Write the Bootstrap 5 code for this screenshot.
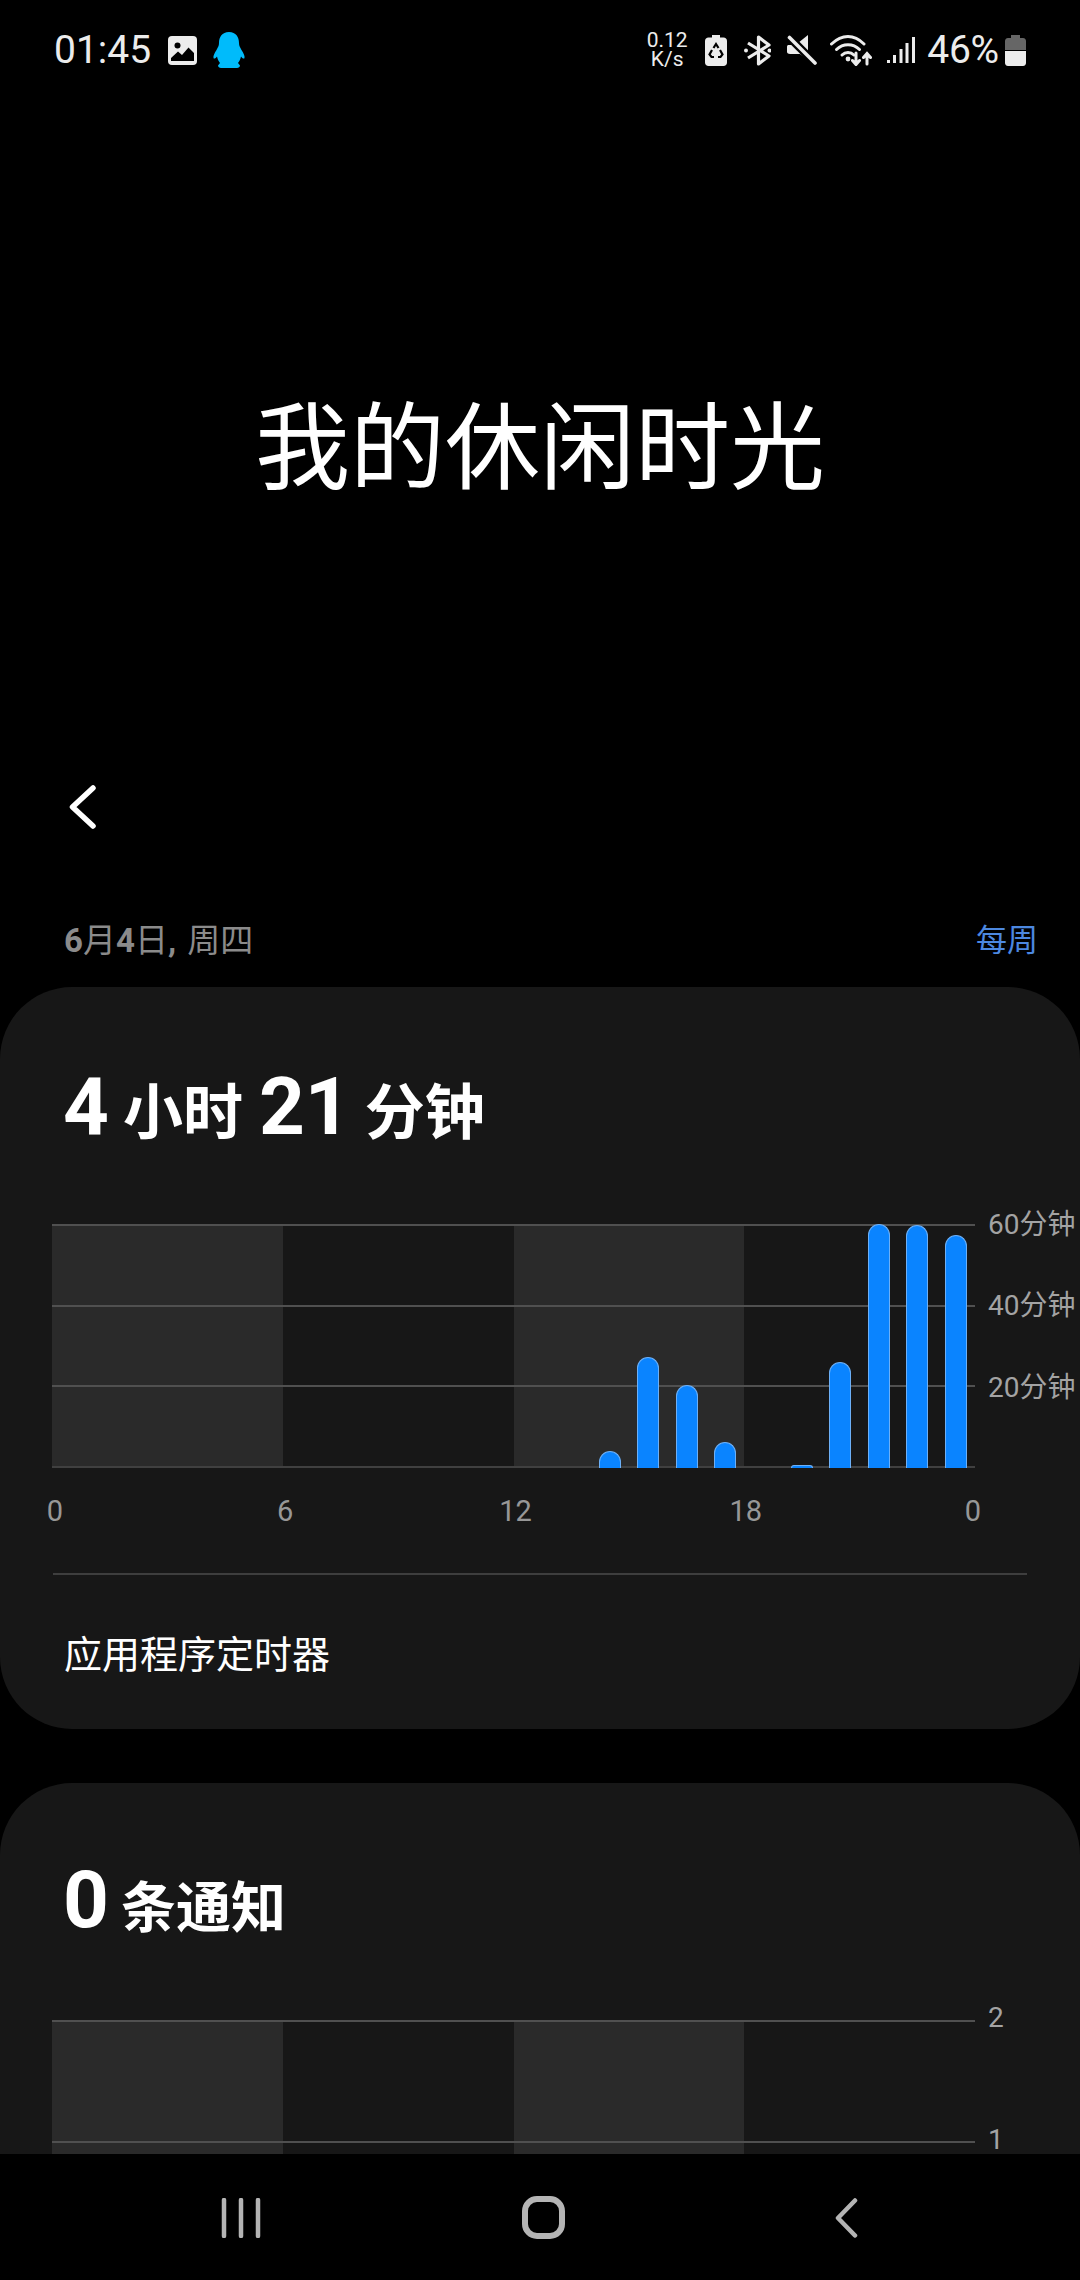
<!DOCTYPE html>
<html lang="zh-CN">
<head>
  <meta charset="UTF-8" />
  <meta name="viewport" content="width=device-width, initial-scale=1.0"/>
  <title>我的休闲时光</title>
  <link href="https://cdn.jsdelivr.net/npm/bootstrap@5.3.2/dist/css/bootstrap.min.css" rel="stylesheet">
  <style>
    body {
      width: 1080px;
      height: 2280px;
      background-color: #000;
      font-family: Roboto, "Noto Sans CJK SC", sans-serif;
      color: #fff;
      overflow: hidden;
      position: relative;
    }

    /* status bar */
    .status-bar { height: 100px; padding: 0 54px 0 54px; color: #ececec; }
    .clock { font-size: 39px; line-height: 1; width: 114px; }
    .batt-pct { font-size: 39px; line-height: 1; letter-spacing: -.2px; margin-left: 12px; margin-right: 6px; }
    .net-speed { font-size: 21px; line-height: 19px; width: 42px; text-align: center; margin-right: 17px; }
    .m-13 { margin-left: 13px; }
    .m-15 { margin-left: 15px; }
    .m-16 { margin-left: 16px; }
    .m-17 { margin-left: 17px; }

    /* title */
    .hero { height: 660px; padding-top: 285px; }
    .hero h1 { font-size: 95px; line-height: 130px; font-weight: 400; margin: 0; text-align: center; }
    .back-row { height: 100px; padding: 25px 0 0 69px; }
    .date-row { height: 127px; padding: 60px 42px 0 64px; line-height: 42px; }
    .date-txt { color: #8b8b8b; font-size: 33px; word-spacing: 3px; }
    .date-txt b { font-weight: 700; }
    .weekly { color: #4c88e0; font-size: 31px; }

    /* cards */
    .panel {
      background-color: #171717;
      border: 0;
      border-radius: 72px;
      color: #fff;
    }
    .panel-time { height: 742px; margin-bottom: 54px; padding-top: 75px; }
    .panel-notif { padding-top: 72px; }
    .headline { height: 90px; padding-left: 63px; line-height: 90px; font-weight: 700; white-space: nowrap; }
    .headline .num { font-size: 80px; }
    .headline .unit { font-size: 60px; margin: 0 16px 0 14px; }
    .panel-notif .headline .unit { font-size: 55px; margin-left: 12px; }
    .chart-wrap { padding-left: 52px; }
    .panel-time .chart-wrap { margin-top: 72px; }
    .panel-notif .chart-wrap { margin-top: 75px; }

    /* chart: three layers stacked in one grid cell */
    .plot { display: grid; width: 923px; flex: none; }
    .plot > div { grid-area: 1 / 1; }
    .bands { display: flex; }
    .bands div { width: 25%; }
    .bands div:nth-child(odd) { background-color: #2a2a2a; }
    .grid-lines { display: flex; flex-direction: column; }
    .grid-lines div { flex: 1; border-top: 2px solid #505050; }
    .grid-lines div:last-child { border-bottom: 2px solid #404040; }
    .bars { display: grid; grid-template-columns: repeat(24, 1fr); align-items: end; justify-items: center; }
    .hour-bar {
      width: 22px;
      background-color: #0a84ff;
      border: 1px solid #6db0f7;
      border-bottom: 0;
      border-radius: 11px 11px 0 0;
    }
    .hour-bar.tiny { border-radius: 3px 3px 0 0; }
    .plot-time { height: 244px; }
    .plot-notif { height: 366px; }

    .y-labels { margin: -22px 0 0 13px; color: #a3a3a3; font-size: 28px; line-height: 40px; white-space: nowrap; }
    .plot-time + .y-labels { margin-top: -19px; }
    .plot-time + .y-labels div { height: 81.4px; }
    .plot-notif + .y-labels div { height: 122px; }
    .x-labels { width: 923px; margin: 23px 0 0 52px; color: #979797; font-size: 29px; line-height: 40px; }
    .x-labels span { width: 0; display: flex; justify-content: center; }
    .x-labels span:not(:last-child) { padding-left: 3px; }
    .x-labels span:last-child { margin-right: 2px; }

    .rule { margin: 42px 53px 0; height: 2px; background-color: #3e3e3e; }
    .timer-row { padding: 54px 0 0 64px; font-size: 38px; line-height: 52px; }

    /* bottom navigation sits over the scrolled content */
    .nav-keys {
      position: absolute;
      left: 0;
      right: 0;
      bottom: 0;
      height: 126px;
      background-color: #000;
    }
    .nav-keys svg { position: absolute; top: 44px; }
    .nav-keys svg.key-home { top: 42px; }
    .key-recent { left: 220px; }
    .key-home { left: 520px; }
    .key-back { left: 832px; }
  </style>
</head>
<body>

<div class="status-bar d-flex align-items-center">
  <span class="clock">01:45</span>
  <svg width="29" height="29" viewBox="0 0 29 29">
    <rect width="29" height="29" rx="4" fill="#ececec"/>
    <circle cx="9.5" cy="9.5" r="3" fill="#000"/>
    <path d="M3 25V22L10 15.5L14 19L20.5 11.5L26 17V25Z" fill="#000"/>
  </svg>
  <svg width="32" height="36" viewBox="0 0 32 36" class="m-16">
    <path fill="#00bbfb" d="M16 0C23 0 26 5 26 11C26 14 27 15 28.5 18C30.5 21 32 24 31.5 26C31 27.5 29 26 28 24.5C27.5 27 26.5 29 25 31L27 33.5C27 35 25.5 36 24 36H8C6.5 36 5 35 5 33.5L7 31C5.5 29 4.5 27 4 24.5C3 26 1 27.5 .5 26C0 24 1.5 21 3.5 18C5 15 6 14 6 11C6 5 9 0 16 0Z"/>
  </svg>

  <div class="net-speed ms-auto">0.12<br>K/s</div>
  <svg width="22" height="31" viewBox="0 0 22 31">
    <path fill="#ececec" d="M7 0H15V2.5H18.5C20.5 2.5 22 4 22 6V27.5C22 29.5 20.5 31 18.5 31H3.5C1.5 31 0 29.5 0 27.5V6C0 4 1.5 2.5 3.5 2.5H7Z"/>
    <path fill="none" stroke="#000" stroke-width="2.2" d="M8.5 13L11 9L13.5 13M15 15L17.5 19.5L15.5 22H13M9 22H6.5L4.5 19.5L7 15"/>
  </svg>
  <svg width="27" height="31" viewBox="0 0 27 31" class="m-17">
    <path fill="none" stroke="#ececec" stroke-width="3.2" stroke-linejoin="round" d="M14.5 15.5V2L25 10L4 23M14.5 15.5V29L25 21L4 8"/>
    <circle cx="2" cy="15.5" r="2" fill="#ececec"/>
    <circle cx="25.5" cy="15.5" r="2" fill="#ececec"/>
  </svg>
  <svg width="30" height="30" viewBox="0 0 30 30" class="m-16">
    <path fill="#ececec" d="M21 0V18L11 8ZM1 10H11L24 24H20L13 19H3C1.5 19 0 18 0 17V12C0 11 .5 10 1 10Z"/>
    <path fill="none" stroke="#000" stroke-width="8" d="M2 2L28 28"/>
    <path fill="none" stroke="#ececec" stroke-width="3.6" stroke-linecap="round" d="M2.5 2.5L28 28"/>
  </svg>
  <svg width="42" height="31" viewBox="0 0 42 31" class="m-13">
    <g fill="none" stroke="#ececec" stroke-width="3" stroke-linecap="round">
      <path d="M1.5 9C12 -1 24 -1 34 9"/>
      <path d="M6.5 14.5C13 8 23 8 29.5 14.5"/>
      <path d="M12 20C15.5 16.5 20.5 16.5 24 20"/>
      <path d="M26 18V29M22.5 25.5L26 29.5L29.5 25.5"/>
      <path d="M37 29V19M33.5 22.5L37 18.5L40.5 22.5"/>
    </g>
    <circle cx="18" cy="24" r="2.4" fill="#ececec"/>
  </svg>
  <svg width="28" height="26" viewBox="0 0 28 26" class="m-15">
    <rect x="0" y="23" width="3" height="3" fill="#ececec"/>
    <rect x="6" y="18" width="3" height="8" fill="#ececec"/>
    <rect x="12.5" y="12" width="3" height="14" fill="#ececec"/>
    <rect x="18.5" y="6" width="3" height="20" fill="#ececec"/>
    <rect x="25" y="0" width="3" height="26" fill="#ececec"/>
  </svg>
  <span class="batt-pct">46%</span>
  <svg width="21" height="31" viewBox="0 0 21 31">
    <path fill="#666" d="M6 0H15V3H18C20 3 21 4.5 21 6V15H0V6C0 4.5 1 3 3 3H6Z"/>
    <path fill="#ececec" d="M0 16H21V28C21 29.5 20 31 18 31H3C1 31 0 29.5 0 28Z"/>
  </svg>
</div>

<div class="hero"><h1>我的休闲时光</h1></div>

<div class="back-row">
  <svg width="27" height="44" viewBox="0 0 27 44">
    <path d="M24 3L3.5 22L24 41" fill="none" stroke="#fff" stroke-width="5.5" stroke-linecap="round" stroke-linejoin="round"/>
  </svg>
</div>

<div class="date-row d-flex justify-content-between">
  <span class="date-txt"><b>6</b>月<b>4</b>日<b>,</b> 周四</span>
  <span class="weekly">每周</span>
</div>

<div class="card panel panel-time">
  <div class="headline"><span class="num">4</span><span class="unit">小时</span><span class="num">21</span><span class="unit">分钟</span></div>
  <div class="chart-wrap d-flex">
    <div class="plot plot-time">
      <div class="bands"><div></div><div></div><div></div><div></div></div>
      <div class="grid-lines"><div></div><div></div><div></div></div>
      <div class="bars">
        <span></span><span></span><span></span><span></span><span></span><span></span>
        <span></span><span></span><span></span><span></span><span></span><span></span>
        <span></span><span></span>
        <div class="hour-bar" style="height:17px"></div>
        <div class="hour-bar" style="height:111px"></div>
        <div class="hour-bar" style="height:83px"></div>
        <div class="hour-bar" style="height:26px"></div>
        <span></span>
        <div class="hour-bar tiny" style="height:3px"></div>
        <div class="hour-bar" style="height:106px"></div>
        <div class="hour-bar" style="height:244px"></div>
        <div class="hour-bar" style="height:243px"></div>
        <div class="hour-bar" style="height:233px"></div>
      </div>
    </div>
    <div class="y-labels"><div>60分钟</div><div>40分钟</div><div>20分钟</div></div>
  </div>
  <div class="x-labels d-flex justify-content-between"><span>0</span><span>6</span><span>12</span><span>18</span><span>0</span></div>
  <div class="rule"></div>
  <div class="timer-row">应用程序定时器</div>
</div>

<div class="card panel panel-notif">
  <div class="headline"><span class="num">0</span><span class="unit">条通知</span></div>
  <div class="chart-wrap d-flex">
    <div class="plot plot-notif">
      <div class="bands"><div></div><div></div><div></div><div></div></div>
      <div class="grid-lines"><div></div><div></div><div></div></div>
    </div>
    <div class="y-labels"><div>2</div><div>1</div></div>
  </div>
</div>

<div class="nav-keys">
  <svg class="key-recent" width="42" height="40" viewBox="0 0 42 40">
    <path d="M4 2V38M21 2V38M38 2V38" stroke="#b4b4b4" stroke-width="4.5" stroke-linecap="round" fill="none"/>
  </svg>
  <svg class="key-home" width="48" height="44" viewBox="0 0 48 44">
    <rect x="5" y="3" width="37" height="37" rx="12" fill="none" stroke="#b4b4b4" stroke-width="6"/>
  </svg>
  <svg class="key-back" width="28" height="40" viewBox="0 0 28 40">
    <path d="M23 2.5L6 20L23 37.5" fill="none" stroke="#b4b4b4" stroke-width="4.5" stroke-linecap="round" stroke-linejoin="round"/>
  </svg>
</div>

<script src="https://cdn.jsdelivr.net/npm/bootstrap@5.3.2/dist/js/bootstrap.bundle.min.js"></script>
</body>
</html>
